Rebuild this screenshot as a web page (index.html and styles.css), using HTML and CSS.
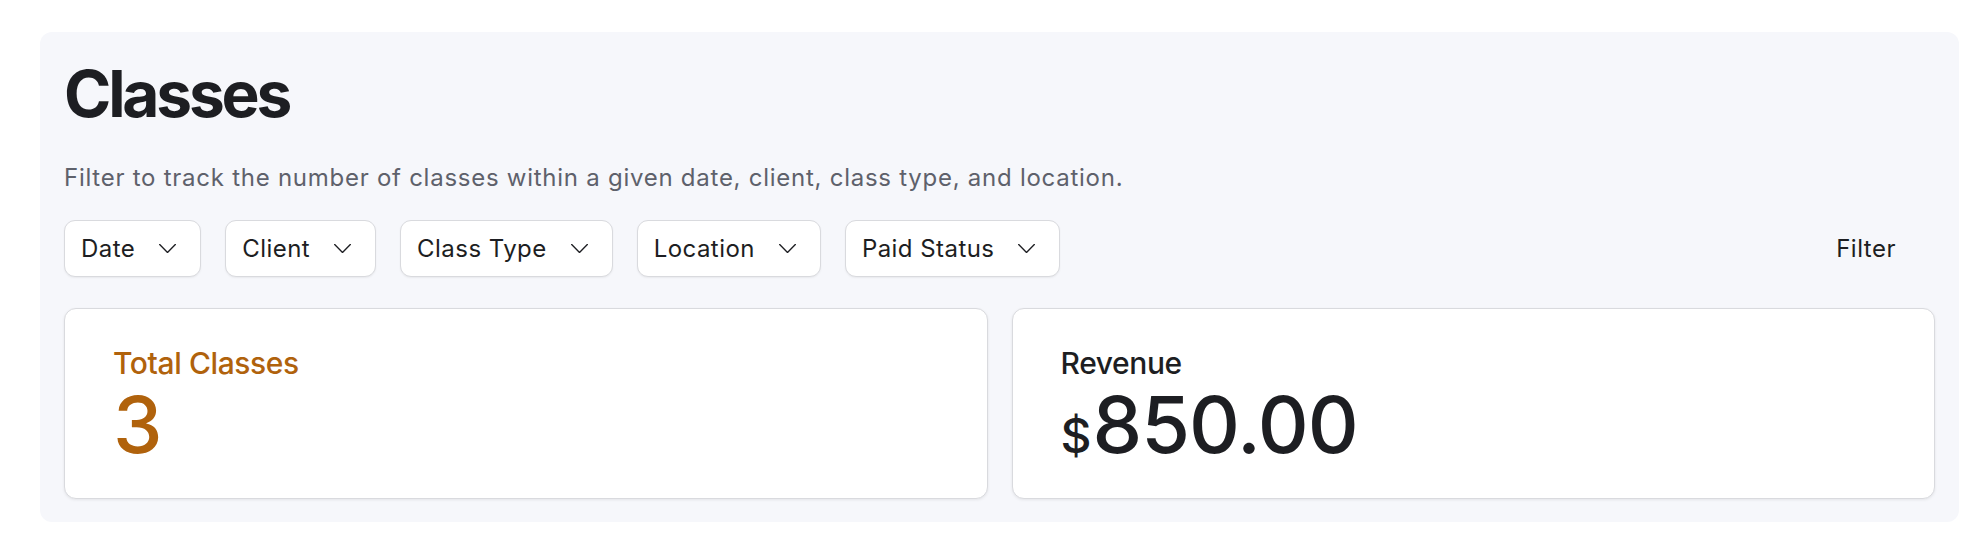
FILE: index.html
```html
<!DOCTYPE html>
<html lang="en">
<head>
<meta charset="utf-8">
<title>Classes</title>
<link rel="stylesheet" href="styles.css">
</head>
<body>
<div class="page">
  <section class="panel">
    <h1 class="title">Classes</h1>
    <p class="desc">Filter to track the number of classes within a given date, client, class type, and location.</p>
    <div class="filters">
      <button class="select">Date<svg class="chev" viewBox="0 0 24 24"><path d="m19.5 8.25-7.5 7.5-7.5-7.5"/></svg></button>
      <button class="select">Client<svg class="chev" viewBox="0 0 24 24"><path d="m19.5 8.25-7.5 7.5-7.5-7.5"/></svg></button>
      <button class="select">Class Type<svg class="chev" viewBox="0 0 24 24"><path d="m19.5 8.25-7.5 7.5-7.5-7.5"/></svg></button>
      <button class="select">Location<svg class="chev" viewBox="0 0 24 24"><path d="m19.5 8.25-7.5 7.5-7.5-7.5"/></svg></button>
      <button class="select">Paid Status<svg class="chev" viewBox="0 0 24 24"><path d="m19.5 8.25-7.5 7.5-7.5-7.5"/></svg></button>
      <button class="filter-btn">Filter</button>
    </div>
    <div class="stats">
      <div class="card">
        <div class="label label-accent">Total Classes</div>
        <div class="value value-accent">3</div>
      </div>
      <div class="card">
        <div class="label">Revenue</div>
        <div class="value"><span class="currency">$</span>850.00</div>
      </div>
    </div>
  </section>
</div>
</body>
</html>
```
FILE: styles.css
```css
* { box-sizing: border-box; }
html, body { margin: 0; background: #ffffff; }
body {
  font-family: Inter, "Noto Sans", "Liberation Sans", sans-serif;
  color: #1d1e22;
}
.page {
  padding: 32px 19px 20px 40px;
}
.panel {
  background: #f6f7fb;
  border-radius: 12px;
  padding: 24px 24px 23px 24px;
  display: flex;
  flex-direction: column;
}
.title {
  margin: 6px 0 0 0;
  font-size: 64px;
  line-height: 1;
  font-weight: 700;
  letter-spacing: -3.2px;
  color: #1d1e22;
}
.desc {
  margin: 35px 0 0 0;
  font-size: 24px;
  line-height: 34px;
  letter-spacing: 0.74px;
  color: #5e616b;
}
.filters {
  margin-top: 25px;
  display: flex;
  align-items: center;
  gap: 24px;
}
.select {
  height: 57px;
  display: flex;
  align-items: center;
  gap: 20px;
  padding: 0 20px 0 16px;
  background: #ffffff;
  border: 1px solid #d9dade;
  border-radius: 11px;
  box-shadow: 0 1px 2px rgba(0, 0, 0, 0.06);
  font-family: inherit;
  font-size: 24px;
  letter-spacing: 0.45px;
  color: #1d1e22;
  cursor: pointer;
}
.chev {
  width: 25px;
  height: 25px;
  fill: none;
  stroke: #1d1e22;
  stroke-width: 1.3;
  stroke-linecap: round;
  stroke-linejoin: round;
}
.filter-btn {
  margin-left: auto;
  height: 57px;
  padding: 0 39px 0 20px;
  background: transparent;
  border: none;
  font-family: inherit;
  font-size: 24px;
  letter-spacing: 0.5px;
  color: #1d1e22;
}
.stats {
  margin-top: 31px;
  display: grid;
  grid-template-columns: 1fr 1fr;
  gap: 24px;
}
.card {
  height: 191px;
  background: #ffffff;
  border: 1px solid #d9dade;
  border-radius: 12px;
  box-shadow: 0 1px 3px rgba(0, 0, 0, 0.08);
  padding: 36px 48px;
}
.label {
  font-size: 30px;
  line-height: 37.5px;
  font-weight: 500;
  letter-spacing: -0.4px;
  color: #1d1e22;
}
.label-accent { color: #b0620c; }
.value {
  font-size: 79px;
  line-height: 82px;
  font-weight: 500;
  color: #1d1e22;
  letter-spacing: -1px;
}
.value-accent { color: #b0620c; }
.currency {
  font-size: 48px;
  letter-spacing: 0;
  margin-right: 1px;
}
```
